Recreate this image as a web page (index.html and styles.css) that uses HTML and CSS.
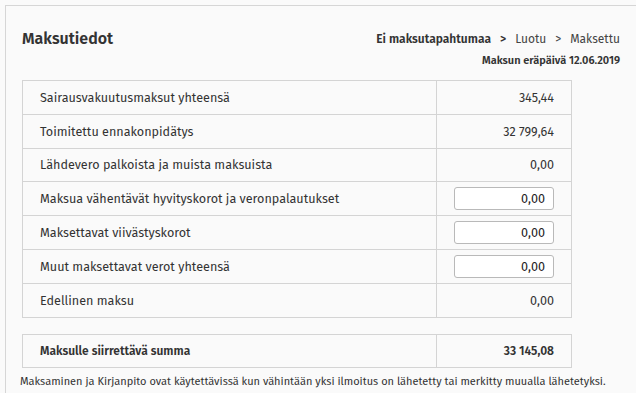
FILE: index.html
```html
<!DOCTYPE html>
<html lang="fi">
<head>
<meta charset="utf-8">
<title>Maksutiedot</title>
<link rel="stylesheet" href="styles.css">
</head>
<body>
<div class="frame">
  <div class="header">
    <h1 class="title">Maksutiedot</h1>
    <div class="status">
      <div class="steps">
        <span class="step active">Ei maksutapahtumaa</span>
        <span class="sep active">&gt;</span>
        <span class="step">Luotu</span>
        <span class="sep">&gt;</span>
        <span class="step">Maksettu</span>
      </div>
      <div class="due">Maksun eräpäivä 12.06.2019</div>
    </div>
  </div>

  <table class="grid">
    <tr><td class="label">Sairausvakuutusmaksut yhteensä</td><td class="value">345,44</td></tr>
    <tr><td class="label">Toimitettu ennakonpidätys</td><td class="value">32 799,64</td></tr>
    <tr><td class="label">Lähdevero palkoista ja muista maksuista</td><td class="value">0,00</td></tr>
    <tr><td class="label">Maksua vähentävät hyvityskorot ja veronpalautukset</td><td class="value"><input class="num" type="text" value="0,00"></td></tr>
    <tr><td class="label">Maksettavat viivästyskorot</td><td class="value"><input class="num" type="text" value="0,00"></td></tr>
    <tr><td class="label">Muut maksettavat verot yhteensä</td><td class="value"><input class="num" type="text" value="0,00"></td></tr>
    <tr><td class="label">Edellinen maksu</td><td class="value">0,00</td></tr>
  </table>

  <table class="grid total">
    <tr><td class="label">Maksulle siirrettävä summa</td><td class="value">33 145,08</td></tr>
  </table>

  <p class="note">Maksaminen ja Kirjanpito ovat käytettävissä kun vähintään yksi ilmoitus on lähetetty tai merkitty muualla lähetetyksi.</p>
</div>
</body>
</html>
```

FILE: styles.css
```css
html, body {
  margin: 0;
  padding: 0;
  background: #fafafa;
}
body {
  font-family: "Fira Sans", "Noto Sans", "Open Sans", sans-serif;
  color: #333;
}
.frame {
  margin: 5px 0 0 5px;
  border-left: 1px solid #d6d6d6;
  border-top: 1px solid #d6d6d6;
  padding: 0 16px 0 16px;
  height: 400px;
}
.header {
  display: flex;
  justify-content: space-between;
  align-items: flex-start;
  padding-top: 22px;
  height: 52px;
}
.title {
  margin: 0;
  font-size: 16px;
  font-weight: 600;
  line-height: 22px;
  color: #333;
}
.status {
  display: flex;
  flex-direction: column;
  align-items: flex-end;
}
.steps {
  display: flex;
  gap: 9px;
  font-size: 12px;
  line-height: 22px;
  color: #444;
}
.steps .active {
  font-weight: 600;
  color: #333;
}
.due {
  font-size: 11px;
  font-weight: 600;
  line-height: 16px;
  margin-top: 3px;
  color: #333;
}
.grid {
  width: 550px;
  border-collapse: collapse;
  table-layout: fixed;
}
.grid td {
  border: 1px solid #d4d4d4;
  height: 33.8px;
  padding: 0 17px;
  font-size: 12.6px;
  color: #333;
  vertical-align: middle;
  box-sizing: border-box;
}
.grid td.label {
  width: 414px;
}
.grid td.value {
  text-align: right;
}
.num {
  width: 100px;
  height: 23px;
  box-sizing: border-box;
  border: 1px solid #b9b9b9;
  border-radius: 3px;
  background: #fff;
  font-family: inherit;
  font-size: 12.6px;
  color: #222;
  text-align: right;
  padding: 0 8px;
  margin: 0;
  vertical-align: middle;
}
.total {
  margin-top: 16px;
}
.total td {
  font-weight: 600;
  font-size: 12px;
}
.note {
  margin: 6px 0 0 -2px;
  font-size: 11px;
  line-height: 16px;
  color: #333;
  white-space: nowrap;
}
```
